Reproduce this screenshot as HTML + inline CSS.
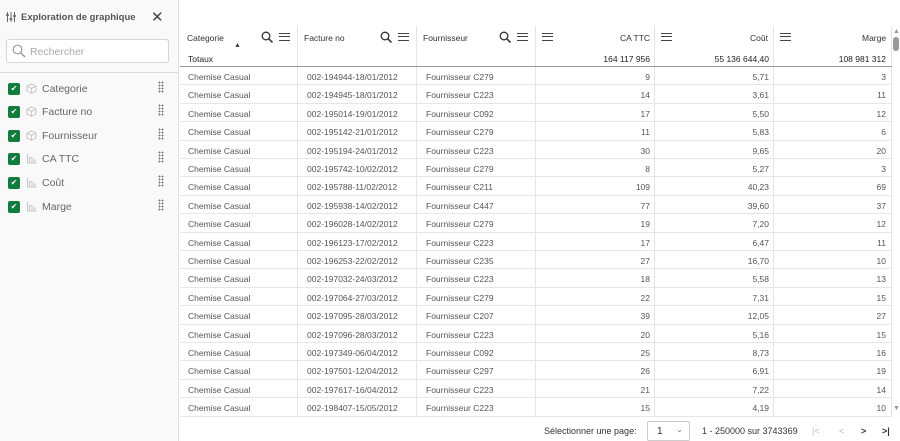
<!DOCTYPE html>
<html><head><meta charset="utf-8"><style>
*{box-sizing:border-box;margin:0;padding:0}
body{width:900px;height:441px;overflow:hidden;background:#fff;font-family:"Liberation Sans",sans-serif;position:relative;color:#404040}
#side{position:absolute;left:0;top:0;width:179px;height:441px;background:#f9f9f9;border-right:1px solid #e0e0e0}
.title{position:absolute;left:21px;top:12px;font-size:9.5px;font-weight:bold;color:#555}
.x{position:absolute;left:151px;top:8px;font-size:15px;color:#444}
.search{position:absolute;left:6px;top:39px;width:163px;height:24px;border:1px solid #d5d5d5;border-radius:3px;background:#fff;font-size:10.5px;color:#aaa;padding:6px 0 0 23px}
.hr{position:absolute;left:0;top:72px;width:178px;height:1px;background:#ddd}
.item{position:absolute;left:0;width:178px;height:20px;font-size:10.5px;color:#666}
.cb{position:absolute;left:8px;top:3px;width:12px;height:12px;background:#0f7d3c;border-radius:2px;color:#fff;font-size:8px;line-height:12px;text-align:center}
.ic{position:absolute;left:26px;top:3px}
.lab{position:absolute;left:42px;top:3px}
.dots{position:absolute;left:158px;top:1px;width:6px;height:12px;background-image:radial-gradient(circle,#777 0.8px,transparent 1px);background-size:3px 3px}
#tbl{position:absolute;left:180px;top:0;width:712px}
.col{position:absolute;top:26px;width:1px;height:391px;background:#e5e5e5}
.hd{position:absolute;top:26px;height:23px;font-size:8.5px;color:#333}
.row{position:absolute;left:0;width:712px;height:18.4px;border-bottom:1px solid #e6e6e6;font-size:8.5px;color:#555}
.row span,.tot span{position:absolute;top:5px;white-space:nowrap}
.tot{position:absolute;left:0;top:49px;width:712px;height:18px;border-bottom:1px solid #999;font-size:8.5px;color:#222}
.r{text-align:right}
.menu{display:inline-block;width:11px;height:8px;border-top:1.5px solid #444;border-bottom:1.5px solid #444;position:relative}
.menu:after{content:"";position:absolute;left:0;right:0;top:2px;border-top:1.5px solid #444}
.foot{position:absolute;top:426px;font-size:9px;color:#333;white-space:nowrap}
</style></head><body>
<div id="side">
<svg style="position:absolute;left:6px;top:12px" width="10" height="10" viewBox="0 0 10 10"><path d="M1.5 0V10M5 0V10M8.5 0V10" stroke="#666" stroke-width="1"/><path d="M0 3H3M3.5 7H6.5M7 4H10" stroke="#666" stroke-width="1.5"/></svg>
<div class="title">Exploration de graphique</div>
<div class="x">✕</div>
<div class="search"><svg style="position:absolute;left:5px;top:4px" width="14" height="14" viewBox="0 0 14 14"><circle cx="5.5" cy="5.5" r="4.3" fill="none" stroke="#999" stroke-width="1.2"/><path d="M8.7 8.7L13 13" stroke="#999" stroke-width="1.4"/></svg>Rechercher</div>
<div class="hr"></div>
<div class="item" style="top:80px"><div class="cb">✔</div><svg class="ic" width="11" height="11" viewBox="0 0 11 11"><path d="M5.5 1L10 3.2V8L5.5 10.2L1 8V3.2ZM1 3.2L5.5 5.4L10 3.2M5.5 5.4V10.2" fill="none" stroke="#bbb" stroke-width=".8"/></svg><div class="lab">Categorie</div><div class="dots"></div></div>
<div class="item" style="top:103px"><div class="cb">✔</div><svg class="ic" width="11" height="11" viewBox="0 0 11 11"><path d="M5.5 1L10 3.2V8L5.5 10.2L1 8V3.2ZM1 3.2L5.5 5.4L10 3.2M5.5 5.4V10.2" fill="none" stroke="#bbb" stroke-width=".8"/></svg><div class="lab">Facture no</div><div class="dots"></div></div>
<div class="item" style="top:127px"><div class="cb">✔</div><svg class="ic" width="11" height="11" viewBox="0 0 11 11"><path d="M5.5 1L10 3.2V8L5.5 10.2L1 8V3.2ZM1 3.2L5.5 5.4L10 3.2M5.5 5.4V10.2" fill="none" stroke="#bbb" stroke-width=".8"/></svg><div class="lab">Fournisseur</div><div class="dots"></div></div>
<div class="item" style="top:150px"><div class="cb">✔</div><svg class="ic" width="11" height="11" viewBox="0 0 11 11"><path d="M1.5 0.5V10H10.5M3.5 10V4.5H6V10M6 10V7H9V10" fill="none" stroke="#bbb" stroke-width=".8"/></svg><div class="lab">CA TTC</div><div class="dots"></div></div>
<div class="item" style="top:174px"><div class="cb">✔</div><svg class="ic" width="11" height="11" viewBox="0 0 11 11"><path d="M1.5 0.5V10H10.5M3.5 10V4.5H6V10M6 10V7H9V10" fill="none" stroke="#bbb" stroke-width=".8"/></svg><div class="lab">Coût</div><div class="dots"></div></div>
<div class="item" style="top:198px"><div class="cb">✔</div><svg class="ic" width="11" height="11" viewBox="0 0 11 11"><path d="M1.5 0.5V10H10.5M3.5 10V4.5H6V10M6 10V7H9V10" fill="none" stroke="#bbb" stroke-width=".8"/></svg><div class="lab">Marge</div><div class="dots"></div></div>
</div>

<div id="tbl">
<div class="col" style="left:117px"></div><div class="col" style="left:236px"></div><div class="col" style="left:355px"></div><div class="col" style="left:474px"></div><div class="col" style="left:593px"></div><div class="col" style="left:711px"></div>
<div class="hd" style="left:7px;top:33px">Categorie</div>
<div style="position:absolute;left:54px;top:42px;font-size:7px">▲</div>
<div class="hd" style="left:124px;top:33px">Facture no</div>
<div class="hd" style="left:243px;top:33px">Fournisseur</div>
<div class="hd" style="left:440px;top:33px">CA TTC</div>
<div class="hd" style="left:570px;top:33px">Coût</div>
<div class="hd" style="left:682px;top:33px">Marge</div>
<svg style="position:absolute;left:81px;top:31px" width="12" height="12" viewBox="0 0 12 12"><circle cx="5" cy="5" r="3.8" fill="none" stroke="#333" stroke-width="1.3"/><path d="M7.8 7.8L11.5 11.5" stroke="#333" stroke-width="1.6"/></svg>
<span class="menu" style="position:absolute;left:99px;top:33px"></span>
<svg style="position:absolute;left:200px;top:31px" width="12" height="12" viewBox="0 0 12 12"><circle cx="5" cy="5" r="3.8" fill="none" stroke="#333" stroke-width="1.3"/><path d="M7.8 7.8L11.5 11.5" stroke="#333" stroke-width="1.6"/></svg>
<span class="menu" style="position:absolute;left:218px;top:33px"></span>
<svg style="position:absolute;left:319px;top:31px" width="12" height="12" viewBox="0 0 12 12"><circle cx="5" cy="5" r="3.8" fill="none" stroke="#333" stroke-width="1.3"/><path d="M7.8 7.8L11.5 11.5" stroke="#333" stroke-width="1.6"/></svg>
<span class="menu" style="position:absolute;left:337px;top:33px"></span>
<span class="menu" style="position:absolute;left:362px;top:33px"></span>
<span class="menu" style="position:absolute;left:481px;top:33px"></span>
<span class="menu" style="position:absolute;left:600px;top:33px"></span>
<div class="tot"><span style="left:8px">Totaux</span><span class="r" style="right:242px">164 117 956</span><span class="r" style="right:123px">55 136 644,40</span><span class="r" style="right:6px">108 981 312</span></div>
<div id="rows"></div>
</div>
<div style="position:absolute;left:893px;top:28px;font-size:7px;color:#999">▲</div>
<div style="position:absolute;left:893px;top:37px;width:6px;height:14px;background:#999;border-radius:3px"></div>
<div style="position:absolute;left:893px;top:405px;font-size:7px;color:#999">▼</div>

<div class="foot" style="left:544px">Sélectionner une page:</div>
<div style="position:absolute;left:647px;top:421px;width:43px;height:20px;border:1px solid #ccc;border-radius:2px;font-size:10px;padding:4px 0 0 9px;color:#333">1<span style="position:absolute;right:6px;top:3px;font-size:8px;color:#777">⌄</span></div>
<div class="foot" style="left:702px">1 - 250000 sur 3743369</div>
<div class="foot" style="left:812px;color:#bbb">|&lt;</div>
<div class="foot" style="left:839px;color:#bbb">&lt;</div>
<div class="foot" style="left:861px;font-weight:bold">&gt;</div>
<div class="foot" style="left:882px;font-weight:bold">&gt;|</div>
<script>
var d=[["002-194944-18/01/2012","C279",9,"5,71",3],["002-194945-18/01/2012","C223",14,"3,61",11],["002-195014-19/01/2012","C092",17,"5,50",12],["002-195142-21/01/2012","C279",11,"5,83",6],["002-195194-24/01/2012","C223",30,"9,65",20],["002-195742-10/02/2012","C279",8,"5,27",3],["002-195788-11/02/2012","C211",109,"40,23",69],["002-195938-14/02/2012","C447",77,"39,60",37],["002-196028-14/02/2012","C279",19,"7,20",12],["002-196123-17/02/2012","C223",17,"6,47",11],["002-196253-22/02/2012","C235",27,"16,70",10],["002-197032-24/03/2012","C223",18,"5,58",13],["002-197064-27/03/2012","C279",22,"7,31",15],["002-197095-28/03/2012","C207",39,"12,05",27],["002-197096-28/03/2012","C223",20,"5,16",15],["002-197349-06/04/2012","C092",25,"8,73",16],["002-197501-12/04/2012","C297",26,"6,91",19],["002-197617-16/04/2012","C223",21,"7,22",14],["002-198407-15/05/2012","C223",15,"4,19",10]];
var h="";d.forEach(function(r,i){h+='<div class="row" style="top:'+(67+i*18.4)+'px"><span style="left:8px">Chemise Casual</span><span style="left:127px">'+r[0]+'</span><span style="left:246px">Fournisseur '+r[1]+'</span><span style="right:242px">'+r[2]+'</span><span style="right:123px">'+r[3]+'</span><span style="right:6px">'+r[4]+'</span></div>'});
document.getElementById("rows").innerHTML=h;
</script>
</body></html>
